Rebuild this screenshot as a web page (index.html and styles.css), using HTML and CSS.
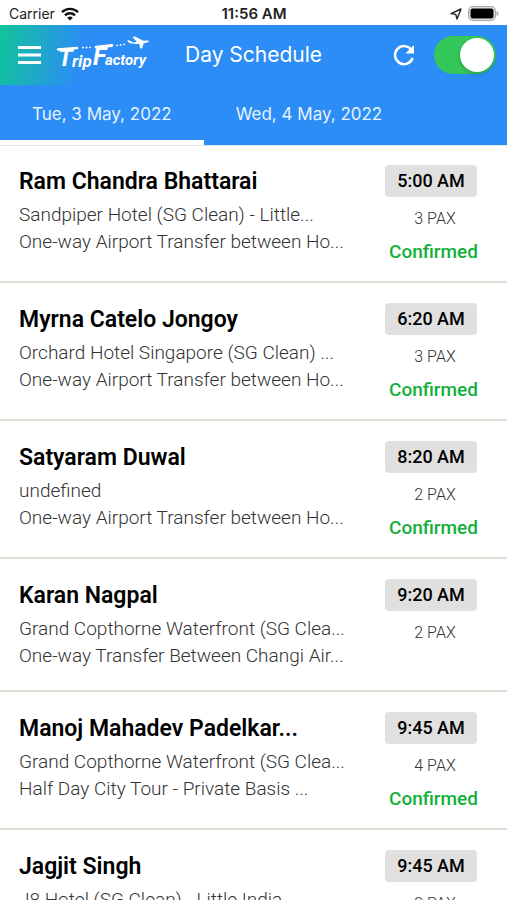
FILE: index.html
```html
<!DOCTYPE html>
<html lang="en">
<head>
<meta charset="utf-8">
<meta name="viewport" content="width=device-width, initial-scale=1">
<title>Day Schedule</title>
<link rel="stylesheet" href="styles.css">
</head>
<body>
<div class="status">
  <div class="carrier">Carrier
    <svg width="18" height="14" viewBox="0 0 18 14" fill="none" stroke="#111" stroke-width="2.4"><path d="M1 5.2a11.4 11.4 0 0 1 16 0M4 8.3a7.1 7.1 0 0 1 10 0"/><path d="M9 13.6L6.2 10.8a4 4 0 0 1 5.6 0z" fill="#111" stroke="none"/></svg>
  </div>
  <div class="clock">11:56 AM</div>
  <div class="indicators">
    <svg width="12" height="12" viewBox="0 0 12 12" fill="none" stroke="#222" stroke-width="1.4" stroke-linejoin="round"><path d="M11 1L7 11 5.800 6.400 1 5.600z"/></svg>
    <svg width="31" height="15" viewBox="0 0 31 15"><rect x=".7" y=".7" width="26.6" height="13.6" rx="4" fill="#eee" stroke="#aaa" stroke-width="1.3"/><rect x="2.500" y="2.500" width="23" height="10" rx="2" fill="#000"/><path d="M28.500 5q2 .8 2 2.500t-2 2.500z" fill="#aaa"/></svg>
  </div>
</div>
<header class="header">
  <div class="bar">
    <button class="icon-button" aria-label="Menu"><svg width="23" height="20" viewBox="0 0 23 20" fill="#fff"><path d="M0 1h23v3H0zM0 8.500h23v3H0zM0 16h23v3H0z"/></svg></button>
    <svg class="logo" width="96" height="42" viewBox="0 0 96 42" role="img" aria-label="TripFactory">
      <g fill="none" stroke="#fff" stroke-linecap="round">
        <path d="M3 15.500L22 14" stroke-width="2.400"/><path d="M41 13.200L57 11.500" stroke-width="2.800"/>
        <path d="M28 13.500h.1M31.500 13.500h.1M35 13.300h.1M62 11.300h.1M65.500 10.900h.1M69 10.300h.1" stroke-width="1.800"/>
      </g>
      <path d="M72 6.500l2-.3 4 2.400 4-.7-4.500-5 2.400-.4 8.600 4.200 4.200-.2q2 .3 1 1.200-2 1.400-5 1.600l-1.500 4.900-2 .3-1-4.700q-6 .4-10-.7z" fill="#fff"/>
      <g class="logo-text" fill="#fff">
        <text x="3" y="32" font-size="24">T</text><text x="17" y="33" font-size="17">rip</text>
        <text x="38" y="31" font-size="25">F</text><text x="50" y="31" font-size="15">actory</text>
      </g>
    </svg>
    <h1>Day Schedule</h1>
    <button class="icon-button" aria-label="Refresh"><svg width="24" height="24" viewBox="0 0 24 24"><path d="M19.500 7A9 9 0 1 0 20.600 15" fill="none" stroke="#fff" stroke-width="2.500"/><path d="M22 2v8.500h-8.500z" fill="#fff"/></svg></button>
    <input class="switch" type="checkbox" role="switch" aria-label="Available" checked>
  </div>
  <nav class="tabs"><a class="tab active" href="#tue">Tue, 3 May, 2022</a><a class="tab" href="#wed">Wed, 4 May, 2022</a></nav>
</header>
<main id="tue">
  <article class="trip">
    <div class="info"><h2>Ram Chandra Bhattarai</h2><p>Sandpiper Hotel (SG Clean) - Little...</p><p>One-way Airport Transfer between Ho...</p></div>
    <div class="side"><time>5:00 AM</time><span class="pax">3 PAX</span><span class="state">Confirmed</span></div>
  </article>
  <article class="trip">
    <div class="info"><h2>Myrna Catelo Jongoy</h2><p>Orchard Hotel Singapore (SG Clean) ...</p><p>One-way Airport Transfer between Ho...</p></div>
    <div class="side"><time>6:20 AM</time><span class="pax">3 PAX</span><span class="state">Confirmed</span></div>
  </article>
  <article class="trip">
    <div class="info"><h2>Satyaram Duwal</h2><p>undefined</p><p>One-way Airport Transfer between Ho...</p></div>
    <div class="side"><time>8:20 AM</time><span class="pax">2 PAX</span><span class="state">Confirmed</span></div>
  </article>
  <article class="trip">
    <div class="info"><h2>Karan Nagpal</h2><p>Grand Copthorne Waterfront (SG Clea...</p><p>One-way Transfer Between Changi Air...</p></div>
    <div class="side"><time>9:20 AM</time><span class="pax">2 PAX</span></div>
  </article>
  <article class="trip">
    <div class="info"><h2>Manoj Mahadev Padelkar...</h2><p>Grand Copthorne Waterfront (SG Clea...</p><p>Half Day City Tour - Private Basis ...</p></div>
    <div class="side"><time>9:45 AM</time><span class="pax">4 PAX</span><span class="state">Confirmed</span></div>
  </article>
  <article class="trip">
    <div class="info"><h2>Jagjit Singh</h2><p>J8 Hotel (SG Clean) - Little India</p></div>
    <div class="side"><time>9:45 AM</time><span class="pax">2 PAX</span></div>
  </article>
</main>
</body>
</html>
```
FILE: styles.css
```css
* { box-sizing: border-box; }
body {
  margin: 0;
  height: 100vh;
  overflow: hidden;
  background: #fff;
  color: #000;
  font-family: Roboto, sans-serif;
}
h1, h2, p { margin: 0; font-weight: 400; }

.status {
  display: grid;
  grid-template-columns: 1fr auto 1fr;
  align-items: center;
  height: 25px;
  padding: 2px 8px 0 9px;
  font: 14px/20px Inter, sans-serif;
  color: #222;
}
.carrier, .indicators { display: flex; align-items: center; gap: 6px; }
.indicators { justify-content: flex-end; }
.clock { font-size: 15px; font-weight: 600; }

.header {
  background: linear-gradient(100deg, #10c49a 0, #1fa8c8 44px, #2b8df5 84px) no-repeat 0 0 / 100% 60px, #2b8df5;
  color: #fff;
  font-family: Inter, sans-serif;
}
.bar {
  display: flex;
  align-items: center;
  height: 60px;
  padding: 0 11px 0 18px;
}
.icon-button {
  display: flex;
  padding: 0;
  border: 0;
  background: none;
}
.logo { margin: 0 34px 0 14px; }
.logo-text { font-family: Roboto, sans-serif; font-style: italic; font-weight: 700; }
h1 { flex: 1; font-size: 21px; line-height: 30px; white-space: nowrap; }
.switch {
  appearance: none;
  width: 62px;
  height: 38px;
  margin: 0 0 0 18px;
  padding: 2px;
  border-radius: 19px;
  background: #34c759;
  display: flex;
  justify-content: flex-end;
}
.switch::before {
  content: "";
  width: 34px;
  height: 34px;
  border-radius: 50%;
  background: #fff;
  box-shadow: 0 2px 4px #0003;
}
.switch:not(:checked) { justify-content: flex-start; background: #bbb; }

.tabs { display: flex; height: 60px; }
.tab {
  flex: 0 0 auto;
  min-width: 40%;
  padding: 17px 32px 0;
  border-bottom: 5px solid transparent;
  color: #e6f2ff;
  font-size: 17px;
  line-height: 24px;
  text-align: center;
  text-decoration: none;
  white-space: nowrap;
}
.tab.active { border-color: #fff; }

main { border-top: 1px solid #e4e4e4; }
.trip {
  display: flex;
  justify-content: space-between;
  padding: 19px 29px 21px 19px;
  border-bottom: 2px solid #e2ded6;
}
.trip + .trip { padding-top: 20px; }
.info { color: #333; }
h2 { margin-bottom: 2px; color: #000; font-size: 23px; font-weight: 600; line-height: 34px; white-space: nowrap; }
p { font-size: 19px; font-weight: 300; line-height: 27px; white-space: nowrap; }
.side { display: flex; flex-direction: column; align-items: center; width: 94px; }
time {
  width: 92px;
  border-radius: 4px;
  background: #e0e0e0;
  font-size: 18px;
  font-weight: 500;
  line-height: 32px;
  text-align: center;
}
.pax { margin: 14px 0 17px 8px; color: #333; font-size: 16px; font-weight: 300; line-height: 16px; }
.state { margin-left: 5px; color: #12b03a; font-size: 19px; font-weight: 500; line-height: 16px; }
```
